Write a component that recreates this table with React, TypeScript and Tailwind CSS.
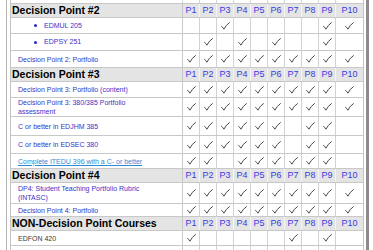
import React from 'react';

type Label = 'bullet' | 'link' | 'ulink' | 'plain';

interface Row {
  kind: 'head' | 'item' | 'blank';
  text?: string[];
  label?: Label;
  checks?: number[];
  h: number;
}

const all = [1, 2, 3, 4, 5, 6, 7, 8, 9, 10];

const rows: Row[] = [
  { kind: 'head', text: ['Decision Point #2'], h: 14 },
  { kind: 'item', text: ['EDMUL 205'], label: 'bullet', checks: [3, 9, 10], h: 16 },
  { kind: 'item', text: ['EDPSY 251'], label: 'bullet', checks: [2, 4, 6, 9], h: 17 },
  { kind: 'item', text: ['Decision Point 2: Portfolio'], label: 'link', checks: all, h: 17 },
  { kind: 'head', text: ['Decision Point #3'], h: 14 },
  { kind: 'item', text: ['Decision Point 3: Portfolio (content)'], label: 'link', checks: all, h: 16 },
  { kind: 'item', text: ['Decision Point 3: 380/385 Portfolio', 'assessment'], label: 'link', checks: all, h: 19 },
  { kind: 'item', text: ['C or better in EDJHM 385'], label: 'link', checks: [1, 2, 3, 4, 5, 6, 8, 9], h: 19 },
  { kind: 'item', text: ['C or better in EDSEC 380'], label: 'link', checks: [1, 2, 3, 4, 5, 6, 8, 9], h: 18 },
  { kind: 'item', text: ['Complete ITEDU 396 with a C- or better'], label: 'ulink', checks: [1, 2, 4, 5, 6, 7, 8, 9], h: 15 },
  { kind: 'head', text: ['Decision Point #4'], h: 14 },
  { kind: 'item', text: ['DP4: Student Teaching Portfolio Rubric', '(INTASC)'], label: 'link', checks: all, h: 21 },
  { kind: 'item', text: ['Decision Point 4: Portfolio'], label: 'link', checks: all, h: 13 },
  { kind: 'head', text: ['NON-Decision Point Courses'], h: 14 },
  { kind: 'item', text: ['EDFON 420'], label: 'plain', checks: [1, 7, 9], h: 15 },
  { kind: 'blank', h: 16 },
];

function Check() {
  return (
    <svg width="9" height="8" viewBox="0 0 9 8" fill="none">
      <path d="M0.6 4.4 Q1.9 5.2 2.9 7.2 Q4.8 3.1 8.4 0.6" stroke="#4a4a4a" strokeWidth="1" strokeLinecap="round" strokeLinejoin="round" />
    </svg>
  );
}

function LabelCell({ row }: { row: Row }) {
  const lines = row.text ?? [];
  if (row.label === 'bullet') {
    return (
      <div className="flex items-center">
        <span className="ml-[23px] w-[3px] h-[3px] rounded-full bg-[#2828c8]" />
        <span className="ml-[7px] text-[7px] leading-[8px] text-[#3535c8]">{lines[0]}</span>
      </div>
    );
  }
  const color =
    row.label === 'ulink'
      ? 'text-[#2f8ad6] underline'
      : row.label === 'plain'
      ? 'text-[#3a3a3a]'
      : 'text-[#3535c8]';
  return (
    <div className={`pl-[7px] text-[7px] leading-[9px] whitespace-nowrap ${color}`}>
      {lines.map((l, i) => (
        <div key={i}>{l}</div>
      ))}
    </div>
  );
}

function PCells({ head, checks }: { head?: boolean; checks?: number[] }) {
  return (
    <>
      {all.map((n) => (
        <div
          key={n}
          className={`flex items-center justify-center border-r shrink-0 ${
            n === 10 ? 'w-[28px] border-r-[#c4c4c4]' : head ? 'w-[17px] border-r-[#f4f4f4]' : 'w-[17px] border-r-[#d2d2d2]'
          } ${head ? 'text-[9px] text-[#3a3ae0]' : ''}`}
        >
          {head ? `P${n}` : checks?.includes(n) ? <Check /> : null}
        </div>
      ))}
    </>
  );
}

export default function App() {
  return (
    <div className="w-[373px] h-[250px] overflow-hidden bg-white font-['Liberation_Sans',Arial,sans-serif]">
      <div className="flex h-[250px]">
        <div className="ml-[6px] border-l border-[#b4b4b4] pl-[3px] pr-[2px] border-r-[3px] border-r-[#8c8c8c] h-full">
          <div className="w-[354px] border-l border-[#c4c4c4] h-full">
            {/* cut-off row above */}
            <div className="flex h-[3px]">
              <div className="w-[172px] border-r border-[#d2d2d2] shrink-0" />
              <PCells />
            </div>
            {rows.map((row, i) => {
              const head = row.kind === 'head';
              return (
                <div
                  key={i}
                  className={`flex border-t border-[#c8c8c8] ${head ? 'bg-[#e4e4e4]' : 'bg-white'}`}
                  style={{ height: row.h }}
                >
                  <div className="w-[172px] shrink-0 border-r border-[#c8c8c8] flex items-center">
                    {head ? (
                      <span className="pl-[1px] text-[10.5px] font-bold text-black leading-none">{row.text?.[0]}</span>
                    ) : row.kind === 'item' ? (
                      <LabelCell row={row} />
                    ) : null}
                  </div>
                  <PCells head={head} checks={row.checks} />
                </div>
              );
            })}
          </div>
        </div>
      </div>
    </div>
  );
}
